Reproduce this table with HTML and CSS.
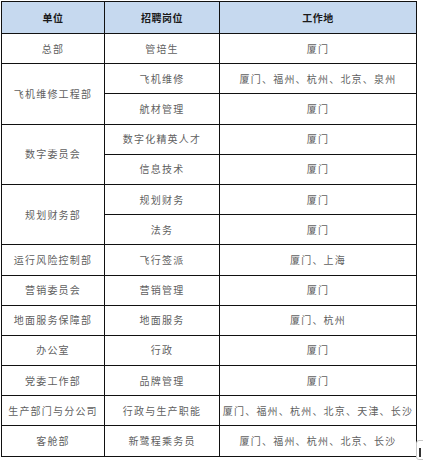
FILE: index.html
```html
<!DOCTYPE html>
<html lang="zh">
<head>
<meta charset="utf-8">
<link rel="stylesheet" href="styles.css">
</head>
<body>
<table class="jobs">
  <colgroup>
    <col class="c1">
    <col class="c2">
    <col class="c3">
  </colgroup>
  <thead>
    <tr class="head"><th>单位</th><th>招聘岗位</th><th>工作地</th></tr>
  </thead>
  <tbody>
    <tr><td>总部</td><td>管培生</td><td>厦门</td></tr>
    <tr><td rowspan="2">飞机维修工程部</td><td>飞机维修</td><td>厦门、福州、杭州、北京、泉州</td></tr>
    <tr><td>航材管理</td><td>厦门</td></tr>
    <tr><td rowspan="2">数字委员会</td><td>数字化精英人才</td><td>厦门</td></tr>
    <tr><td>信息技术</td><td>厦门</td></tr>
    <tr><td rowspan="2">规划财务部</td><td>规划财务</td><td>厦门</td></tr>
    <tr><td>法务</td><td>厦门</td></tr>
    <tr><td>运行风险控制部</td><td>飞行签派</td><td>厦门、上海</td></tr>
    <tr><td>营销委员会</td><td>营销管理</td><td>厦门</td></tr>
    <tr><td>地面服务保障部</td><td>地面服务</td><td>厦门、杭州</td></tr>
    <tr><td>办公室</td><td>行政</td><td>厦门</td></tr>
    <tr><td>党委工作部</td><td>品牌管理</td><td>厦门</td></tr>
    <tr><td>生产部门与分公司</td><td>行政与生产职能</td><td>厦门、福州、杭州、北京、天津、长沙</td></tr>
    <tr><td>客舱部</td><td>新鹭程乘务员</td><td>厦门、福州、杭州、北京、长沙</td></tr>
  </tbody>
</table>
<div class="corner-handle"></div>
</body>
</html>
```
FILE: styles.css
```css
html, body {
  margin: 0;
  padding: 0;
  background: #fff;
}
body {
  position: relative;
  width: 423px;
  height: 463px;
  overflow: hidden;
  font-family: "Noto Sans CJK SC", "DejaVu Sans", sans-serif;
}
.jobs {
  border-collapse: collapse;
  table-layout: fixed;
  width: 415px;
  margin: 1px 0 0 1px;
}
.c1 { width: 103px; }
.c2 { width: 115px; }
.c3 { width: 197px; }
.jobs th, .jobs td {
  border: 1px solid #111;
  padding: 0;
  text-align: center;
  vertical-align: middle;
  font-size: 10px;
  line-height: 12px;
  white-space: nowrap;
}
.jobs th {
  background: #c6d9ef;
  color: #1a1a1a;
  font-weight: bold;
  height: 31px;
  letter-spacing: 0.5px;
}
.jobs td {
  color: #5f5f5f;
  height: 29.2px;
  letter-spacing: 1.2px;
}
.corner-handle {
  position: absolute;
  left: 416px;
  top: 440px;
  width: 10px;
  height: 20px;
  border: 1px solid #c8c8c8;
  border-radius: 3px;
  box-sizing: border-box;
}
.corner-handle::before {
  content: "";
  position: absolute;
  left: 2px;
  top: 7px;
  width: 2px;
  height: 9px;
  background: #333;
}
```
